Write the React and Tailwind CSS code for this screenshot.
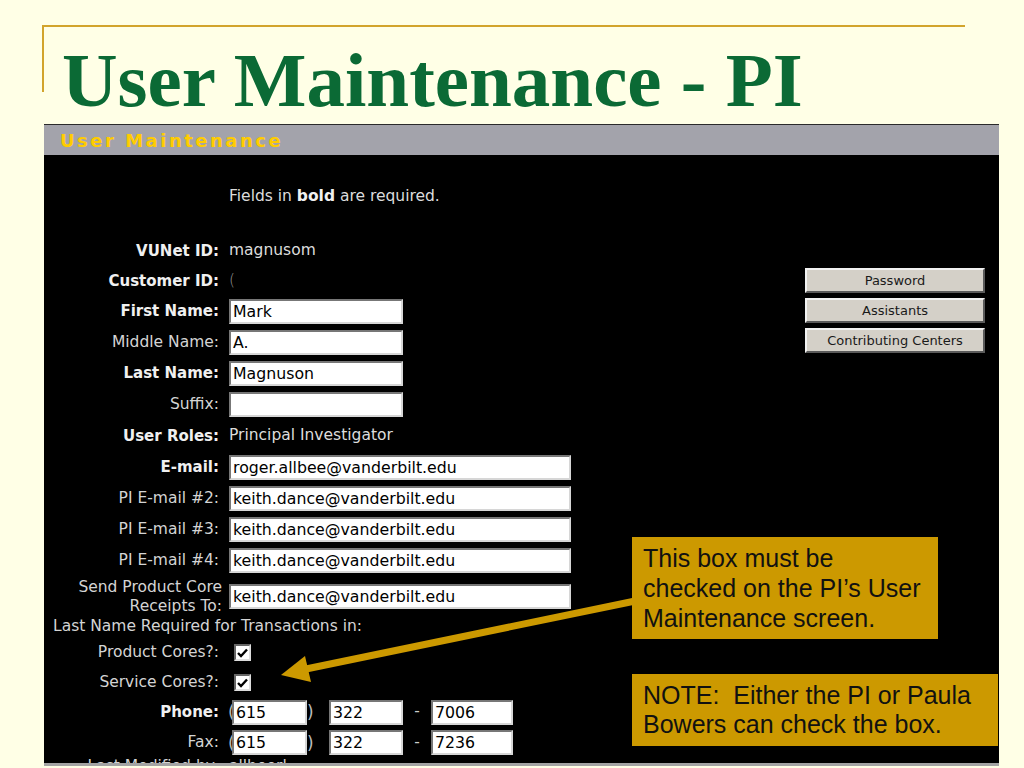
import React from "react";

const dv = { fontFamily: '"DejaVu Sans", Verdana, sans-serif' };

function Field({ value, w }) {
  return (
    <input
      type="text"
      readOnly
      value={value}
      className={`h-[25px] ${w} shrink-0 bg-white text-black text-[15.75px] leading-[19px] pl-[2px] pr-[2px] border-2 border-t-[#777] border-l-[#777] border-b-[#d6d6d6] border-r-[#d6d6d6] outline-none`}
      style={dv}
    />
  );
}

function Row({ label, bold, h, children }) {
  return (
    <div className={`flex items-center shrink-0 ${h}`}>
      <div
        className={`w-[175px] shrink-0 text-right ${
          bold ? "font-bold text-[15px] text-[#f0f0f0]" : "text-[15.5px] text-[#d4d4d4]"
        }`}
      >
        {label}
      </div>
      <div className="ml-[10px] flex items-center text-[15.5px] text-[#dcdcdc]">{children}</div>
    </div>
  );
}

function Check() {
  return (
    <div className="ml-[5px] w-[17px] h-[17px] bg-white border-2 border-t-[#666] border-l-[#666] border-b-[#ddd] border-r-[#ddd] flex items-center justify-center">
      <svg width="11" height="10" viewBox="0 0 11 10">
        <path d="M1 5 L4 8 L10 1.5" fill="none" stroke="#000" strokeWidth="2.4" />
      </svg>
    </div>
  );
}

function Btn({ children }) {
  return (
    <div
      className="h-[25px] w-[180px] bg-[#d4d0c8] border-2 border-t-[#f2f2f2] border-l-[#f2f2f2] border-b-[#5a5a5a] border-r-[#5a5a5a] flex items-center justify-center text-[13px] text-[#1a1a1a]"
      style={dv}
    >
      {children}
    </div>
  );
}

function PhoneRow({ label, bold, h, a, b, c }) {
  return (
    <Row label={label} bold={bold} h={h}>
      <span className="w-[4px] text-[#bbbbbb] text-[17px] leading-[20px] -ml-[1px]">(</span>
      <Field value={a} w="w-[75px]" />
      <span className="w-[22px] text-[#bbbbbb] text-[17px] leading-[20px]">)</span>
      <Field value={b} w="w-[74px]" />
      <span className="w-[28px] text-center text-[#cccccc]">-</span>
      <Field value={c} w="w-[82px]" />
    </Row>
  );
}

export default function App() {
  return (
    <div className="relative w-[1024px] h-[768px] overflow-hidden bg-[#ffffe6]" style={dv}>
      <div className="pt-[25px] pl-[42px]">
        <div className="w-[923px] h-[67px] border-t-2 border-l-2 border-[#d2a42c]">
          <h1
            className="mt-[15px] ml-[18px] whitespace-nowrap text-[77px] leading-[77px] font-bold text-[#0b6a35]"
            style={{ fontFamily: '"Liberation Serif", "Times New Roman", serif' }}
          >
            User Maintenance - PI
          </h1>
        </div>
      </div>

      <div className="mt-[32px] ml-[44px] w-[955px] border-t border-[#2a2a2a] border-b-[3px] border-b-[#a4a4a4]">
        <div className="h-[30px] bg-[#a3a3ab] flex items-center pl-[16px]">
          <span className="text-[18px] font-bold tracking-[2.5px] text-[#ffcc00]">User Maintenance</span>
        </div>
        <div className="h-[608px] bg-black overflow-hidden flex">
          <div className="flex-1 pt-[27px]">
            <div className="h-[30px] flex items-center pl-[185px] text-[15.5px] text-[#dcdcdc]">
              <span>
                Fields in <b className="text-[#f0f0f0]">bold</b> are required.
              </span>
            </div>
            <div className="h-[24px]" />
            <Row label="VUNet ID:" bold h="h-[30px]">magnusom</Row>
            <Row label="Customer ID:" bold h="h-[30px]">
              <span className="text-[#9a9a9a] font-light">(</span>
            </Row>
            <Row label="First Name:" bold h="h-[31px]">
              <Field value="Mark" w="w-[174px]" />
            </Row>
            <Row label="Middle Name:" h="h-[31px]">
              <Field value="A." w="w-[174px]" />
            </Row>
            <Row label="Last Name:" bold h="h-[31px]">
              <Field value="Magnuson" w="w-[174px]" />
            </Row>
            <Row label="Suffix:" h="h-[31px]">
              <Field value="" w="w-[174px]" />
            </Row>
            <Row label="User Roles:" bold h="h-[32px]">Principal Investigator</Row>
            <Row label="E-mail:" bold h="h-[31px]">
              <Field value="roger.allbee@vanderbilt.edu" w="w-[342px]" />
            </Row>
            <Row label="PI E-mail #2:" h="h-[31px]">
              <Field value="keith.dance@vanderbilt.edu" w="w-[342px]" />
            </Row>
            <Row label="PI E-mail #3:" h="h-[31px]">
              <Field value="keith.dance@vanderbilt.edu" w="w-[342px]" />
            </Row>
            <Row label="PI E-mail #4:" h="h-[31px]">
              <Field value="keith.dance@vanderbilt.edu" w="w-[342px]" />
            </Row>
            <div className="flex items-center h-[41px]">
              <div className="w-[178px] shrink-0 text-right text-[15.5px] leading-[19px] text-[#d4d4d4]">
                Send Product Core
                <br />
                Receipts To:
              </div>
              <div className="ml-[7px]">
                <Field value="keith.dance@vanderbilt.edu" w="w-[342px]" />
              </div>
            </div>
            <div className="h-[20px] flex items-center pl-[9px] text-[15.5px] text-[#d4d4d4]">
              Last Name Required for Transactions in:
            </div>
            <Row label="Product Cores?:" h="h-[31px]">
              <Check />
            </Row>
            <Row label="Service Cores?:" h="h-[29px]">
              <Check />
            </Row>
            <PhoneRow label="Phone:" bold h="h-[30px]" a="615" b="322" c="7006" />
            <PhoneRow label="Fax:" h="h-[31px]" a="615" b="322" c="7236" />
            <div className="flex h-[16px]">
              <div className="w-[175px] shrink-0 text-right text-[15.5px] leading-[16px] text-[#d4d4d4]">
                Last Modified by:
              </div>
              <div className="ml-[10px] text-[15.5px] leading-[16px] text-[#d4d4d4]">allbeerl</div>
            </div>
          </div>
          <div className="w-[180px] mr-[14px] pt-[113px] flex flex-col gap-[5px]">
            <Btn>Password</Btn>
            <Btn>Assistants</Btn>
            <Btn>Contributing Centers</Btn>
          </div>
        </div>
      </div>

      <svg className="absolute left-0 top-0 pointer-events-none" width="1024" height="768" viewBox="0 0 1024 768">
        <line x1="640" y1="600" x2="306" y2="669" stroke="#cc9900" strokeWidth="7" />
        <polygon points="281,675 305,656 311,682" fill="#cc9900" />
      </svg>

      <div
        className="absolute left-[632px] top-[537px] w-[306px] h-[102px] bg-[#cc9900] pl-[11px] pt-[6px] text-[25px] leading-[30px] text-[#111]"
        style={{ fontFamily: '"Liberation Sans", Arial, sans-serif' }}
      >
        This box must be
        <br />
        checked on the PI’s User
        <br />
        Maintenance screen.
      </div>
      <div
        className="absolute left-[632px] top-[674px] w-[366px] h-[72px] bg-[#cc9900] pl-[11px] pt-[7px] text-[25px] leading-[29px] text-[#111] whitespace-pre"
        style={{ fontFamily: '"Liberation Sans", Arial, sans-serif' }}
      >
        {"NOTE:  Either the PI or Paula\nBowers can check the box."}
      </div>
    </div>
  );
}
